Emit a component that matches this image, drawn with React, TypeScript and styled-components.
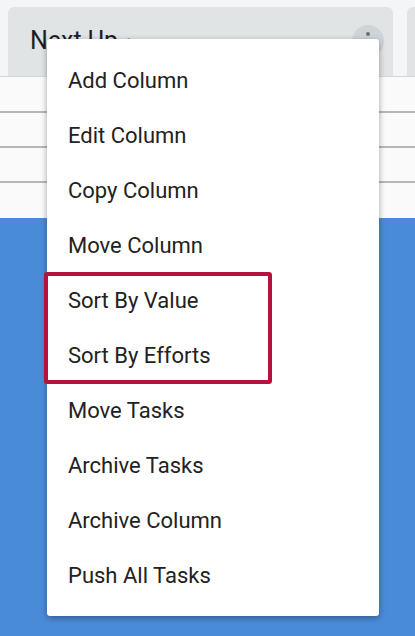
import styled, { createGlobalStyle } from 'styled-components';

const GlobalStyle = createGlobalStyle`
  html, body {
    margin: 0;
    padding: 0;
  }
  body {
    font-family: Roboto, 'Liberation Sans', Arial, sans-serif;
    background: #4a8bd8;
  }
`;

const menuItems = [
  'Add Column',
  'Edit Column',
  'Copy Column',
  'Move Column',
  'Sort By Value',
  'Sort By Efforts',
  'Move Tasks',
  'Archive Tasks',
  'Archive Column',
  'Push All Tasks'
];

const highlighted = ['Sort By Value', 'Sort By Efforts'];

const App = () => {
  const before = menuItems.slice(0, 4);
  const after = menuItems.slice(6);

  return (
    <>
      <GlobalStyle />
      <Page>
        <HeaderStrip>
          <ColumnHeader>
            <Title>
              Next Up <Count>1</Count>
            </Title>
            <DotsButton>
              <svg width='4' height='18' viewBox='0 0 4 18'>
                <circle cx='2' cy='2' r='2' fill='#6b6f73' />
                <circle cx='2' cy='9' r='2' fill='#6b6f73' />
                <circle cx='2' cy='16' r='2' fill='#6b6f73' />
              </svg>
            </DotsButton>
          </ColumnHeader>
          <ColumnHeader />
        </HeaderStrip>
        <Rows>
          <Row first />
          <Row />
          <Row />
          <Row />
        </Rows>
        <Board />

        <Menu>
          {before.map((item) => (
            <MenuItem key={item}>{item}</MenuItem>
          ))}
          <Highlight>
            {highlighted.map((item) => (
              <MenuItem key={item}>{item}</MenuItem>
            ))}
          </Highlight>
          {after.map((item) => (
            <MenuItem key={item}>{item}</MenuItem>
          ))}
        </Menu>
      </Page>
    </>
  );
};

export default App;

const Page = styled.div`
  position: relative;
  width: 415px;
  height: 636px;
  display: flex;
  flex-direction: column;
  overflow: hidden;
  background: #4a8bd8;
`;

const HeaderStrip = styled.div`
  display: flex;
  gap: 14px;
  padding: 7px 0 0 8px;
  background: #f4f5f6;
`;

const ColumnHeader = styled.div`
  flex: 0 0 385px;
  height: 69px;
  box-sizing: border-box;
  display: flex;
  align-items: center;
  justify-content: space-between;
  padding: 0 9px 0 22px;
  background: #e1e4e5;
  border-radius: 6px 6px 0 0;
`;

const Title = styled.div`
  font-size: 25px;
  color: #1e1e1e;
  margin-top: -2px;
`;

const Count = styled.span`
  font-size: 15px;
  color: #8a8f93;
`;

const DotsButton = styled.div`
  width: 32px;
  height: 32px;
  border-radius: 50%;
  background: #cfd4d8;
  display: flex;
  align-items: center;
  justify-content: center;
  margin-top: -2px;
`;

const Rows = styled.div`
  display: flex;
  flex-direction: column;
  background: #fafafa;
  border-top: 1px solid #d5d8da;
`;

const Row = styled.div<{ first?: boolean }>`
  height: ${(p) => (p.first ? '34px' : '33px')};
  border-bottom: 2px solid #b4b7b9;

  &:last-child {
    height: 35px;
    border-bottom: none;
  }
`;

const Board = styled.div`
  flex: 1;
  background: #4a8bd8;
`;

const Menu = styled.div`
  position: absolute;
  left: 47px;
  top: 39px;
  width: 332px;
  box-sizing: border-box;
  padding: 14px 0 13px;
  background: #fff;
  border-radius: 3px;
  box-shadow: 0 2px 6px rgba(0, 0, 0, 0.35);
`;

const MenuItem = styled.div`
  height: 55px;
  display: flex;
  align-items: center;
  padding-left: 21px;
  font-size: 22px;
  color: #222222;
`;

const Highlight = styled.div`
  position: relative;

  &::after {
    content: '';
    position: absolute;
    left: -3px;
    top: -1px;
    width: 228px;
    height: 112px;
    box-sizing: border-box;
    border: 4px solid #b5123f;
    border-radius: 3px;
    pointer-events: none;
  }
`;
